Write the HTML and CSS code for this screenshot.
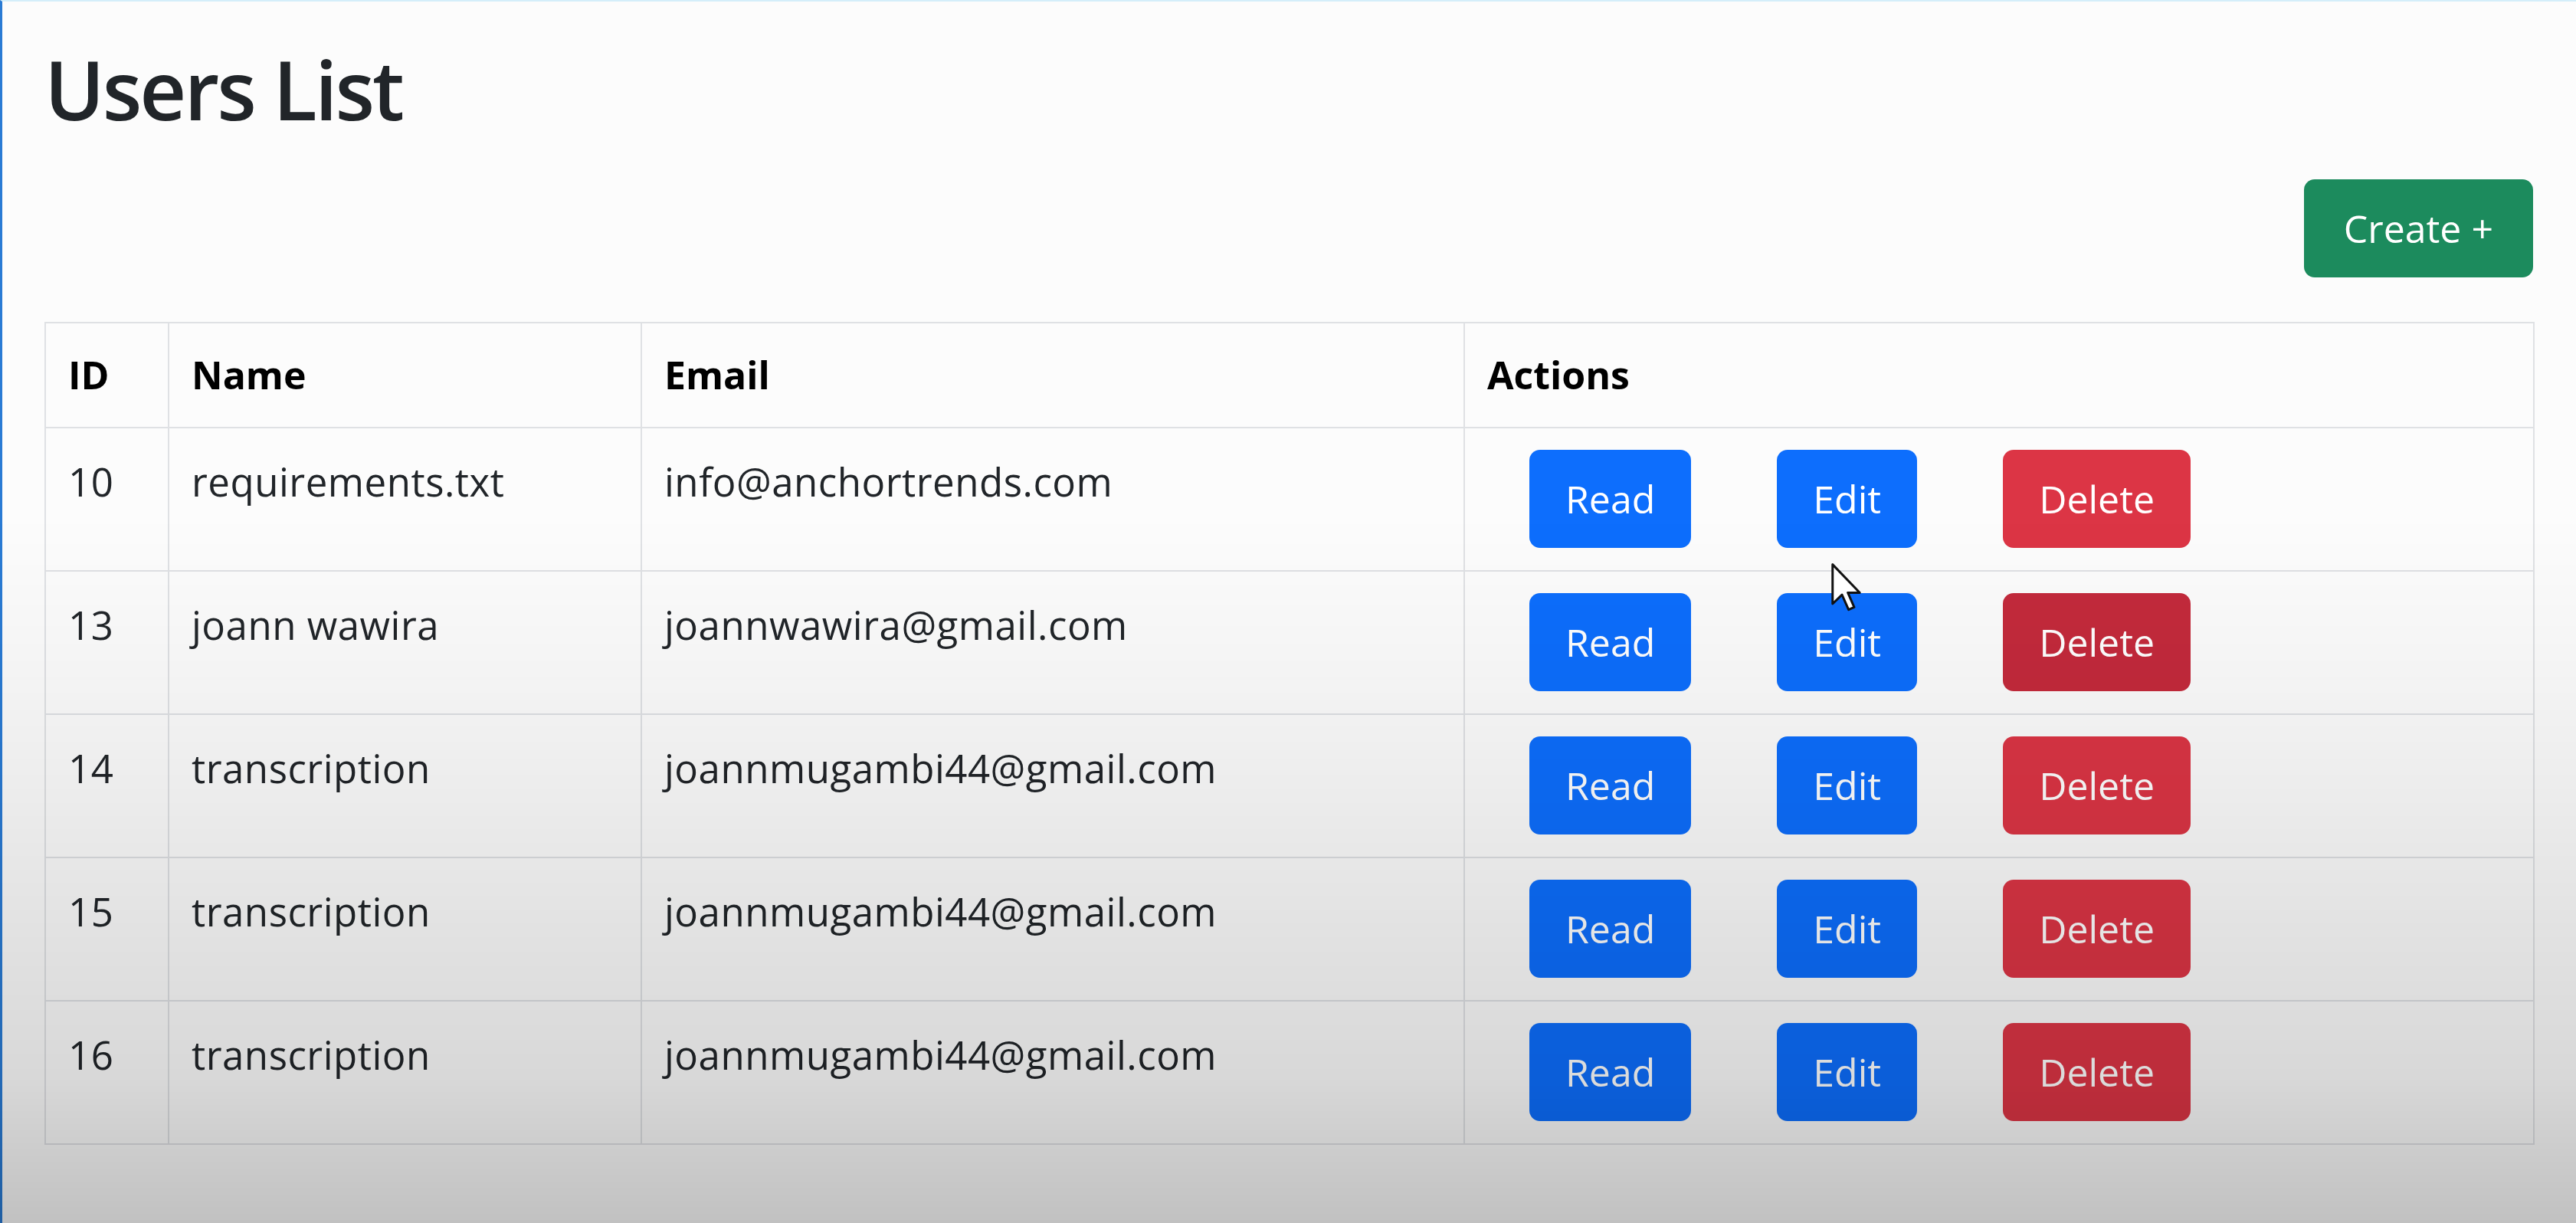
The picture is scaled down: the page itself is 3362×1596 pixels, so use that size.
FILE: index.html
```html
<!DOCTYPE html>
<html lang="en">
<head>
<meta charset="utf-8">
<title>Users List</title>
<link rel="stylesheet" href="styles.css">
</head>
<body>
<div class="frame">
  <main class="page">
    <h1 class="title">Users List</h1>
    <div class="toolbar">
      <button class="btn btn-success btn-create">Create +</button>
    </div>
    <table class="users">
      <colgroup>
        <col class="col-id">
        <col class="col-name">
        <col class="col-email">
        <col class="col-actions">
      </colgroup>
      <thead>
        <tr><th>ID</th><th>Name</th><th>Email</th><th>Actions</th></tr>
      </thead>
      <tbody>
        <tr>
          <td>10</td><td>requirements.txt</td><td>info@anchortrends.com</td>
          <td class="actions"><div class="btns"><button class="btn btn-primary">Read</button><button class="btn btn-primary">Edit</button><button class="btn btn-danger">Delete</button></div></td>
        </tr>
        <tr>
          <td>13</td><td>joann wawira</td><td>joannwawira@gmail.com</td>
          <td class="actions"><div class="btns"><button class="btn btn-primary">Read</button><button class="btn btn-primary">Edit</button><button class="btn btn-danger is-hover">Delete</button></div></td>
        </tr>
        <tr>
          <td>14</td><td>transcription</td><td>joannmugambi44@gmail.com</td>
          <td class="actions"><div class="btns"><button class="btn btn-primary">Read</button><button class="btn btn-primary">Edit</button><button class="btn btn-danger">Delete</button></div></td>
        </tr>
        <tr>
          <td>15</td><td>transcription</td><td>joannmugambi44@gmail.com</td>
          <td class="actions"><div class="btns"><button class="btn btn-primary">Read</button><button class="btn btn-primary">Edit</button><button class="btn btn-danger">Delete</button></div></td>
        </tr>
        <tr>
          <td>16</td><td>transcription</td><td>joannmugambi44@gmail.com</td>
          <td class="actions"><div class="btns"><button class="btn btn-primary">Read</button><button class="btn btn-primary">Edit</button><button class="btn btn-danger">Delete</button></div></td>
        </tr>
      </tbody>
    </table>
  </main>
  <div class="vignette"></div>
  <svg class="cursor" viewBox="0 0 12 19" width="40" height="63" aria-hidden="true">
    <path d="M0.5 0.5 L0.5 16 L4.2 12.4 L6.8 18.3 L9 17.3 L6.5 11.6 L11.2 11.6 Z" fill="#ffffff" stroke="#111111" stroke-width="0.9" stroke-linejoin="round"/>
  </svg>
</div>
</body>
</html>
```
FILE: styles.css
```css
html, body {
  margin: 0;
  padding: 0;
  height: 100%;
}

body {
  background: #fcfcfc;
  font-family: "Open Sans", "Noto Sans", sans-serif;
  color: #212529;
  overflow: hidden;
}

.frame {
  position: relative;
  box-sizing: border-box;
  min-height: 100vh;
  border-left: 3px solid #2a7bd4;
  border-top: 2px solid #d4eefa;
}

.page {
  padding: 0 56px 0 55px;
}

.title {
  margin: 48px 0 0;
  font-size: 106px;
  line-height: 132px;
  font-weight: 600;
  color: #212529;
  letter-spacing: -3px;
}

.toolbar {
  display: flex;
  justify-content: flex-end;
  margin-top: 52px;
}

.btn {
  display: inline-flex;
  align-items: center;
  justify-content: center;
  box-sizing: border-box;
  height: 128px;
  padding: 0 47px;
  border: 0;
  border-radius: 14px;
  font-family: inherit;
  font-size: 50px;
  font-weight: 400;
  color: #ffffff;
  cursor: pointer;
}

.btn-create {
  padding: 0 52px;
}

.btn-success { background: #1c8b5d; }
.btn-primary { background: #0d6efd; }
.btn-danger { background: #dc3545; }
.btn-danger.is-hover { background: #c42a3c; }

.users {
  margin-top: 58px;
  width: 100%;
  table-layout: fixed;
  border-collapse: collapse;
  font-size: 51px;
  line-height: 75px;
  border: 2px solid #dfe1e4;
}

.col-id { width: 161px; }
.col-name { width: 617px; }
.col-email { width: 1074px; }
.col-actions { width: 1396px; }

.users th,
.users td {
  border: 2px solid #dfe1e4;
  text-align: left;
  vertical-align: top;
  white-space: nowrap;
}

.users th {
  padding: 30px 29px;
  font-size: 50px;
  font-weight: 700;
  color: #000000;
}

.users td {
  padding: 32px 29px 29px;
  font-weight: 400;
  letter-spacing: 0.5px;
  color: #212529;
}

.users td.actions {
  padding: 28px 29px 29px;
  letter-spacing: 0;
}

.btns {
  display: flex;
  gap: 112px;
  padding-left: 55px;
}

.vignette {
  position: fixed;
  inset: 0;
  pointer-events: none;
  background: linear-gradient(to bottom,
    rgba(0, 0, 0, 0) 0%,
    rgba(0, 0, 0, 0) 42%,
    rgba(0, 0, 0, 0.025) 52%,
    rgba(0, 0, 0, 0.06) 64%,
    rgba(0, 0, 0, 0.1) 76%,
    rgba(0, 0, 0, 0.14) 88%,
    rgba(0, 0, 0, 0.23) 100%);
}

.cursor {
  position: absolute;
  left: 2387px;
  top: 733px;
  pointer-events: none;
}
```
